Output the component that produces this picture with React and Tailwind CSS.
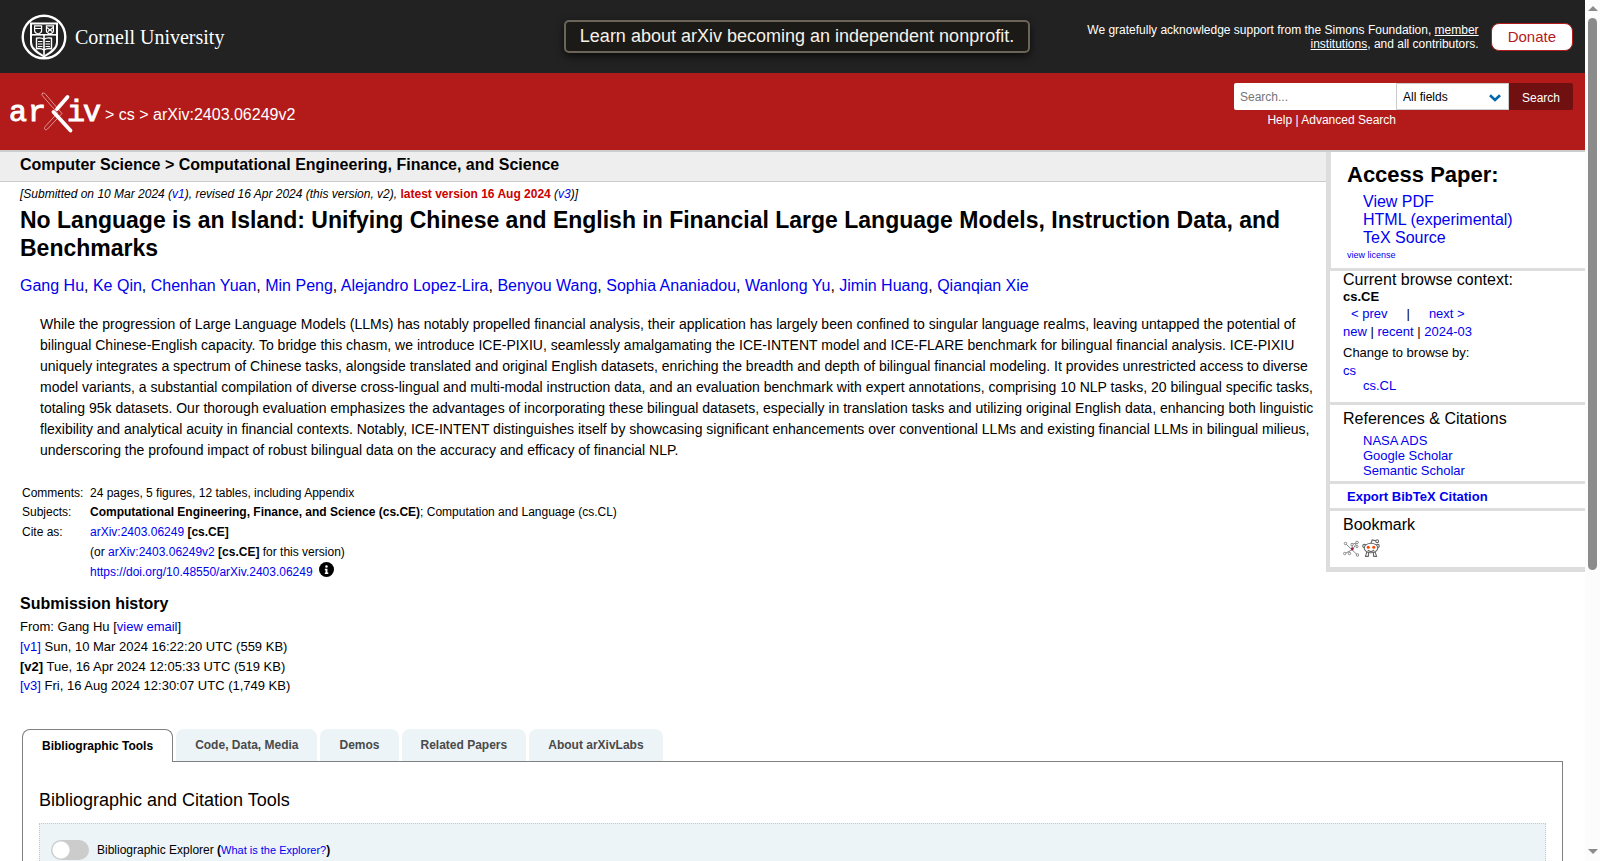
import React, { useState } from "react";

const authors = [
  "Gang Hu", "Ke Qin", "Chenhan Yuan", "Min Peng", "Alejandro Lopez-Lira",
  "Benyou Wang", "Sophia Ananiadou", "Wanlong Yu", "Jimin Huang", "Qianqian Xie",
];

const tabs = ["Bibliographic Tools", "Code, Data, Media", "Demos", "Related Papers", "About arXivLabs"];

const A = ({ children, className = "" }) => (
  <a href="#" className={`text-[#0000ee] hover:underline ${className}`}>{children}</a>
);

const CornellLogo = () => (
  <a href="#" className="flex items-center gap-2 text-white">
    <svg viewBox="0 0 46 46" className="size-[46px]" fill="none" stroke="#fff">
      <circle cx="23" cy="23" r="21.3" strokeWidth="2.4" />
      <path d="M10 9.5h26v19c0 6-6 10-13 14c-7-4-13-8-13-14z" strokeWidth="2" />
      <path d="M10 20.8h26" strokeWidth="1.6" />
      <path d="M13.6 11.8h7v5c0 1.6-1.8 2.6-3.5 3.2c-1.7-.6-3.5-1.6-3.5-3.2z" strokeWidth="1.2" />
      <path d="M25.4 11.8h7v5c0 1.6-1.8 2.6-3.5 3.2c-1.7-.6-3.5-1.6-3.5-3.2z" strokeWidth="1.2" />
      <path d="M14 14.5h6M26 13.5l3 2.5 3-2.5M27 17.5l2-2 2 2" strokeWidth="1.2" />
      <path d="M15.5 24.3c3-.8 5.5-.4 7.5 1c2-1.4 4.5-1.8 7.5-1v10.5c-3-.6-5.5-.2-7.5 1.2c-2-1.4-4.5-1.8-7.5-1.2z" strokeWidth="1.4" />
      <path d="M23 21v20" strokeWidth="1.6" />
      <path d="M17 27.5h4.5M17 30h4.5M17 32.5h4.5M24.5 27.5h4.5M24.5 30h4.5M24.5 32.5h4.5" strokeWidth="1.2" />
    </svg>
    <span className="font-['Liberation_Serif',serif] text-xl leading-6">Cornell University</span>
  </a>
);

const ArxivLogo = () => (
  <svg viewBox="0 0 92 42" className="h-[42px] w-[92px]" role="img" aria-label="arXiv logo">
    <g fill="#fff" stroke="#fff" strokeWidth="1" fontFamily="Liberation Mono, monospace" fontSize="30">
      <text x="-1" y="28.5">a</text>
      <text x="18" y="28.5">r</text>
      <text x="57" y="28.5">i</text>
      <text x="73" y="28.5">v</text>
    </g>
    <g fill="none" strokeLinecap="round">
      <path d="M32.5 1.3c1.2-.9 2.5.2 3.3 1.3L52 21.5L37.5 37c-1.2 1.2-2.6.8-3-.2c-.3-.9.3-1.8 1-2.6L47.5 21L32.3 3.5c-.6-.8-.5-1.7.2-2.2z" stroke="#e8b4b4" strokeWidth="0.8" />
      <path d="M57.5 5L47 17" stroke="#fff" strokeWidth="3.8" />
      <path d="M43.5 20L60.5 38.5" stroke="#fff" strokeWidth="3.8" />
    </g>
  </svg>
);

const TopBar = () => (
  <div className="flex h-[73px] items-center bg-[#222] pr-3 pl-[21px]">
    <div className="flex flex-1">
      <CornellLogo />
    </div>
    <a href="#" className="rounded-[5px] border-2 border-[#6b6459] bg-[#1c1a17] px-[14px] py-1 text-lg leading-[21px] text-[#f5f1e8] shadow-[0_3px_8px_rgba(0,0,0,0.7)]">
      Learn about arXiv becoming an independent nonprofit.
    </a>
    <div className="flex flex-1 items-center justify-end gap-3">
      <p className="w-[400px] text-right text-xs leading-[14px] text-white">
        We gratefully acknowledge support from the Simons Foundation,{" "}
        <a href="#" className="underline">member institutions</a>, and all contributors.
      </p>
      <a href="#" className="rounded-lg border border-[#b31b1b] bg-white px-4 py-px text-[15px] leading-6 text-[#b31b1b]">
        Donate
      </a>
    </div>
  </div>
);

const SearchForm = () => (
  <form className="pt-[10px] text-xs text-white" onSubmit={(e) => e.preventDefault()}>
    <div className="flex h-[27px]">
      <input
        type="text"
        aria-label="Search term"
        placeholder="Search..."
        className="w-[162px] rounded-l-[2px] bg-white px-[6px] text-black placeholder:text-[#757575]"
      />
      <div className="relative">
        <select
          aria-label="Field to search"
          className="h-full w-[113px] appearance-none border border-[#ccc] bg-white px-[6px] text-black"
        >
          <option>All fields</option>
          <option>Title</option>
          <option>Author</option>
        </select>
        <svg viewBox="0 0 12 8" className="pointer-events-none absolute top-[11px] right-2 h-2 w-3" fill="none" stroke="#0068ac" strokeWidth="2.6">
          <path d="M1 1.2l5 4.8l5-4.8" />
        </svg>
      </div>
      <button type="submit" className="w-16 rounded-r-[2px] bg-[#701010] pt-[2px]">Search</button>
    </div>
    <p className="w-[162px] pt-[3px] text-right leading-[14px]">
      <a href="#">Help</a> | <a href="#">Advanced Search</a>
    </p>
  </form>
);

const Header = () => (
  <div className="flex h-[77px] justify-between bg-[#b31b1b] pr-3 pl-[10px]">
    <div className="flex items-center gap-[3px] pt-[2px] text-base text-white">
      <a href="#"><ArxivLogo /></a>
      <span className="pt-1">&gt; <a href="#">cs</a> &gt; arXiv:2403.06249v2</span>
    </div>
    <SearchForm />
  </div>
);

const Sidebar = () => (
  <aside className="w-[259px] shrink-0 border-b-[5px] border-l-4 border-[#ddd] text-[13px] leading-[15px]">
    <section className="border-b-[3px] border-l border-[#ddd] pb-[7px] pl-4">
      <h2 className="pt-[9px] text-[22px] leading-7 font-bold">Access Paper:</h2>
      <ul className="pt-1 pl-4 text-base leading-[18px]">
        <li><A>View PDF</A></li>
        <li><A>HTML (experimental)</A></li>
        <li><A>TeX Source</A></li>
      </ul>
      <div className="pt-[3px] text-[9px] leading-[11px]"><A>view license</A></div>
    </section>
    <section className="border-b-[3px] border-[#ddd] pb-[9px] pl-[13px]">
      <h3 className="text-base leading-[18px]">Current browse context:</h3>
      <div className="font-bold leading-4">cs.CE</div>
      <div className="flex gap-[19px] pl-2 leading-[17px]">
        <A>&lt; prev</A><span>|</span><A>next &gt;</A>
      </div>
      <div className="leading-[19px]"><A>new</A> | <A>recent</A> | <A>2024-03</A></div>
      <div className="pt-[4px] leading-[15px]">Change to browse by:</div>
      <div className="pt-[3px]"><A>cs</A></div>
      <div className="pl-5"><A>cs.CL</A></div>
    </section>
    <section className="border-b-[3px] border-[#ddd] pt-1 pb-[3px] pl-[13px]">
      <h3 className="text-base leading-[20px]">References &amp; Citations</h3>
      <ul className="pt-1 pl-5">
        <li><A>NASA ADS</A></li>
        <li><A>Google Scholar</A></li>
        <li><A>Semantic Scholar</A></li>
      </ul>
    </section>
    <section className="border-b-[3px] border-[#ddd] pt-[5px] pb-[3px] pl-[13px]">
      <button className="px-1 leading-4 font-bold text-[#0000ee]">Export BibTeX Citation</button>
    </section>
    <section className="pt-1 pb-[10px] pl-[13px]">
      <h3 className="text-base leading-5">Bookmark</h3>
      <div className="flex gap-[3px] pt-[4px]">
        <a href="#" aria-label="BibSonomy">
          <svg viewBox="0 0 16 18" className="h-[18px] w-4" fill="#fff" stroke="#888" strokeWidth="1">
            <path d="M2.5 4.5L15 16.5M9.5 10.5L14 3.5M9.5 10.5L9 5.5L14 3.5M9.5 10.5L2 14.5M6.5 12.5v2.5" fill="none" />
            <circle cx="2.5" cy="4.5" r="1.2" />
            <circle cx="14" cy="3.5" r="1.3" />
            <circle cx="9" cy="5.5" r="1.2" />
            <circle cx="14" cy="7.5" r="1.1" />
            <circle cx="1.7" cy="14.5" r="1.2" />
            <circle cx="6.5" cy="14.5" r="1.2" />
            <circle cx="14.5" cy="16" r="1.3" />
            <circle cx="9.3" cy="10" r="1.4" fill="#a02040" stroke="none" />
          </svg>
        </a>
        <a href="#" aria-label="Reddit">
          <svg viewBox="0 0 18 18" className="size-[18px]" fill="#fff" stroke="#666" strokeWidth="1.1">
            <path d="M5.5 12.5C3.5 14 4.5 17 3 17.4h3.5M12.5 12.5c2 1.5 1 4.5 2.5 4.9h-3.5" />
            <path d="M6.5 13v4.4M11.5 13v4.4" />
            <circle cx="2.3" cy="7" r="1.6" />
            <circle cx="15.7" cy="7" r="1.6" />
            <ellipse cx="9" cy="9" rx="6.8" ry="4.8" />
            <path d="M9 4.3L10.2 1l4 .9" fill="none" />
            <circle cx="15.2" cy="2.2" r="1.4" />
            <circle cx="6.2" cy="8.3" r="1.5" fill="#ff4500" stroke="none" />
            <circle cx="11.7" cy="8.3" r="1.5" fill="#ff4500" stroke="none" />
            <path d="M5.8 11.3c1.8 1.3 4.6 1.3 6.4 0" fill="none" />
          </svg>
        </a>
      </div>
    </section>
  </aside>
);

const Metadata = () => (
  <table className="mt-[25px] ml-[22px] text-left text-xs leading-[14px]">
    <tbody className="align-top">
      <tr>
        <td className="w-[68px] pb-[5px]">Comments:</td>
        <td className="pb-[5px]">24 pages, 5 figures, 12 tables, including Appendix</td>
      </tr>
      <tr>
        <td className="pb-[6px]">Subjects:</td>
        <td className="pb-[6px]">
          <b>Computational Engineering, Finance, and Science (cs.CE)</b>; Computation and Language (cs.CL)
        </td>
      </tr>
      <tr>
        <td className="pb-[6px]">Cite as:</td>
        <td className="pb-[6px]"><A>arXiv:2403.06249</A> <b>[cs.CE]</b></td>
      </tr>
      <tr>
        <td></td>
        <td className="pb-[3px]">(or <A>arXiv:2403.06249v2</A> <b>[cs.CE]</b> for this version)</td>
      </tr>
      <tr>
        <td></td>
        <td>
          <div className="flex gap-[6px]">
            <A className="pt-[3px]">https://doi.org/10.48550/arXiv.2403.06249</A>
            <svg viewBox="0 0 512 512" className="size-[15px]" role="img" aria-label="More information">
              <circle cx="256" cy="256" r="256" />
              <path d="M256 110a44 44 0 1 1 0 88a44 44 0 1 1 0-88zM200 232h88v128h28v48H200v-48h24v-80h-24z" fill="#fff" />
            </svg>
          </div>
        </td>
      </tr>
    </tbody>
  </table>
);

const History = () => (
  <section className="pt-[14px] pl-5 text-[13px]">
    <h2 className="text-base leading-[22px] font-bold">Submission history</h2>
    <p className="pt-[2px] leading-5">From: Gang Hu [<A>view email</A>]</p>
    <p className="leading-5"><A>[v1]</A> Sun, 10 Mar 2024 16:22:20 UTC (559 KB)</p>
    <p className="leading-[19px]"><b>[v2]</b> Tue, 16 Apr 2024 12:05:33 UTC (519 KB)</p>
    <p className="leading-5"><A>[v3]</A> Fri, 16 Aug 2024 12:30:07 UTC (1,749 KB)</p>
  </section>
);

const Labs = () => {
  const [active, setActive] = useState(0);
  const [enabled, setEnabled] = useState(false);

  return (
    <div className="mt-[33px] mr-[22px] ml-[22px]">
      <div role="tablist" className="relative flex gap-[3px] text-xs font-bold">
        {tabs.map((tab, i) => (
          <button
            key={tab}
            role="tab"
            aria-selected={i === active}
            onClick={() => setActive(i)}
            className={
              i === active
                ? "-mb-px h-[33px] rounded-t-lg border border-b-0 border-[#808080] bg-white px-[19px] text-black"
                : "h-8 rounded-t-lg bg-[#ecf4f8] px-[19px] text-[#4a4a4a]"
            }
          >
            {tab}
          </button>
        ))}
      </div>
      <div className="border border-[#808080] px-4 pt-[26px]">
        <h2 className="text-lg leading-6">Bibliographic and Citation Tools</h2>
        <div className="mt-[11px] h-40 border border-dotted border-[#b8cdd5] bg-[#ecf4f8] px-[11px] pt-4">
          <label className="flex items-center gap-2 text-xs leading-5">
            <input
              type="checkbox"
              checked={enabled}
              onChange={() => setEnabled(!enabled)}
              className="h-5 w-[38px] appearance-none rounded-full bg-[#ccc] bg-[radial-gradient(circle_at_10px_10px,#fff_8px,transparent_9px)] checked:bg-[#2a7ab8]"
            />
            <span>
              Bibliographic Explorer <b>(</b><A className="text-[11px]">What is the Explorer?</A><b>)</b>
            </span>
          </label>
        </div>
      </div>
    </div>
  );
};

const Scrollbar = () => (
  <div className="flex w-[15px] shrink-0 flex-col items-center justify-between bg-[#fcfcfc]" aria-hidden="true">
    <div className="flex flex-col items-center gap-[7px] pt-[6px]">
      <svg viewBox="0 0 10 5" className="h-[5px] w-[10px]"><path d="M0 5L5 0L10 5z" fill="#8b8b8b" /></svg>
      <div className="h-[552px] w-[9px] rounded-full bg-[#8b8b8b]" />
    </div>
    <svg viewBox="0 0 10 5" className="mb-[7px] h-[5px] w-[10px]"><path d="M0 0L5 5L10 0z" fill="#8b8b8b" /></svg>
  </div>
);

const App = () => (
  <div className="flex h-screen overflow-hidden bg-white font-['Liberation_Sans',Arial,sans-serif] text-black">
    <div className="min-w-0 flex-1">
      <header>
        <TopBar />
        <Header />
      </header>
      <main>
        <div className="flex items-start border-t-2 border-[#ccc]">
          <div className="min-w-0 flex-1">
            <div className="border-b border-[#ccc] bg-[#eee] pt-1 pb-[7px] pl-5 text-base leading-[18px] font-bold">
              Computer Science &gt; Computational Engineering, Finance, and Science
            </div>
            <div className="pt-[5px] pl-5 text-xs leading-[14px] italic">
              [Submitted on 10 Mar 2024 (<A>v1</A>), revised 16 Apr 2024 (this version, v2),{" "}
              <b className="text-[#cc0000] not-italic">latest version 16 Aug 2024</b> (<A>v3</A>)]
            </div>
            <h1 className="pt-[5px] pr-4 pl-5 text-[23px] leading-7 font-bold">
              No Language is an Island: Unifying Chinese and English in Financial Large Language Models, Instruction Data, and Benchmarks
            </h1>
            <div className="pt-[14px] pl-5 text-base leading-5">
              {authors.map((name, i) => (
                <span key={name}>{i > 0 && ", "}<A>{name}</A></span>
              ))}
            </div>
            <p className="pt-[18px] pr-2 pl-10 text-sm leading-[21px]">
              While the progression of Large Language Models (LLMs) has notably propelled financial analysis, their application has largely been confined to singular language realms, leaving untapped the potential of bilingual Chinese-English capacity. To bridge this chasm, we introduce ICE-PIXIU, seamlessly amalgamating the ICE-INTENT model and ICE-FLARE benchmark for bilingual financial analysis. ICE-PIXIU uniquely integrates a spectrum of Chinese tasks, alongside translated and original English datasets, enriching the breadth and depth of bilingual financial modeling. It provides unrestricted access to diverse model variants, a substantial compilation of diverse cross-lingual and multi-modal instruction data, and an evaluation benchmark with expert annotations, comprising 10 NLP tasks, 20 bilingual specific tasks, totaling 95k datasets. Our thorough evaluation emphasizes the advantages of incorporating these bilingual datasets, especially in translation tasks and utilizing original English data, enhancing both linguistic flexibility and analytical acuity in financial contexts. Notably, ICE-INTENT distinguishes itself by showcasing significant enhancements over conventional LLMs and existing financial LLMs in bilingual milieus, underscoring the profound impact of robust bilingual data on the accuracy and efficacy of financial NLP.
            </p>
            <Metadata />
            <History />
          </div>
          <Sidebar />
        </div>
        <Labs />
      </main>
    </div>
    <Scrollbar />
  </div>
);

export default App;
